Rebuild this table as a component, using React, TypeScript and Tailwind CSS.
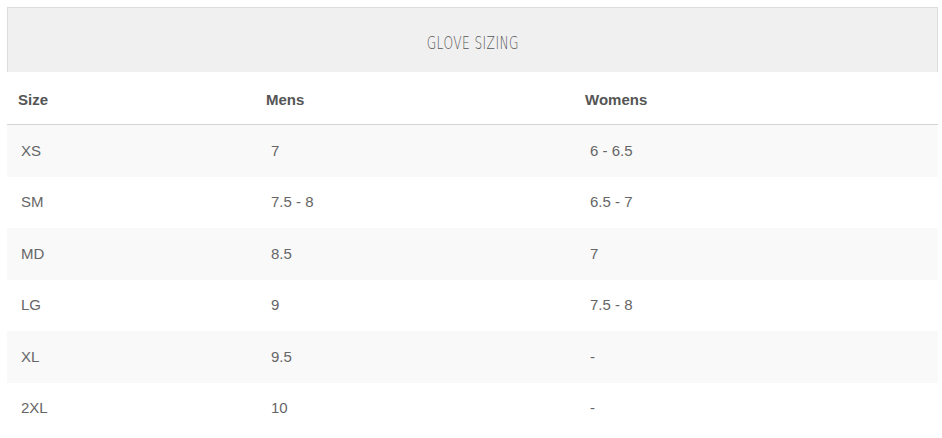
import React from "react";

type Row = { size: string; mens: string; womens: string };

const rows: Row[] = [
   { size: "XS", mens: "7", womens: "6 - 6.5" },
   { size: "SM", mens: "7.5 - 8", womens: "6.5 - 7" },
   { size: "MD", mens: "8.5", womens: "7" },
   { size: "LG", mens: "9", womens: "7.5 - 8" },
   { size: "XL", mens: "9.5", womens: "-" },
   { size: "2XL", mens: "10", womens: "-" },
];

export default function App() {
   return (
      <div className="min-h-[438px] w-[942px] bg-white pt-[7px] pl-[7px] font-['Liberation_Sans',Arial,sans-serif]">
         <div className="w-[931px]">
            {/* title band */}
            <div className="flex h-[65px] items-center justify-center border-t border-l border-r border-[#dcdcdc] bg-[#f0f0f0] pt-[4px]">
               <span className="inline-block scale-x-[0.68] font-['DejaVu_Sans',sans-serif] text-[18px] font-extralight tracking-[0.6px] text-[#555]">
                  GLOVE SIZING
               </span>
            </div>

            {/* column heads */}
            <div className="grid h-[53px] grid-cols-[248px_319px_1fr] items-center border-b border-[#d4d4d4] pt-[4px] text-[15px] font-bold text-[#555]">
               <div className="pl-[11px]">Size</div>
               <div className="pl-[11px]">Mens</div>
               <div className="pl-[11px]">Womens</div>
            </div>

            {/* rows */}
            {rows.map((row, i) => (
               <div
                  key={row.size}
                  className={`grid h-[51.5px] grid-cols-[248px_319px_1fr] items-center text-[15px] text-[#666] ${
                     i % 2 === 0 ? "bg-[#f9f9f9]" : "bg-white"
                  }`}
               >
                  <div className="pl-[14px]">{row.size}</div>
                  <div className="pl-[16px]">{row.mens}</div>
                  <div className="pl-[16px]">{row.womens}</div>
               </div>
            ))}
         </div>
      </div>
   );
}
